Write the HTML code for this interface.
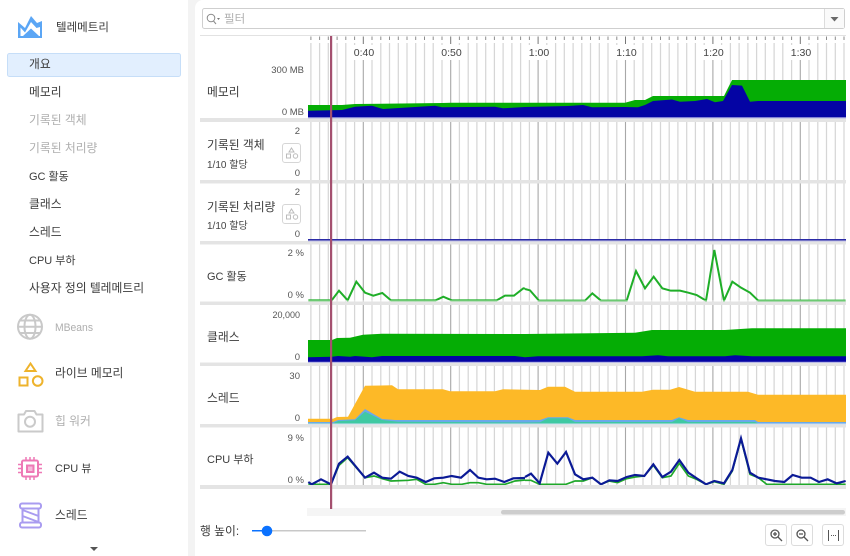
<!DOCTYPE html>
<html><head><meta charset="utf-8">
<style>
html,body{margin:0;padding:0;width:850px;height:556px;overflow:hidden;background:#f3f3f3}
svg{display:block}
text{font-family:"Liberation Sans","Noto Sans CJK KR",sans-serif;font-size:11.8px;fill:#3a3a3a}
.m{font-size:11px}
.d{fill:#aeaeae}
.a{font-size:9.5px;fill:#555;text-anchor:end}
.s{font-size:10px;fill:#444}
.t{font-size:10.5px;fill:#444;text-anchor:middle}
</style></head>
<body>
<svg width="850" height="556" viewBox="0 0 850 556" xmlns="http://www.w3.org/2000/svg">

<!-- panels -->
<rect x="-10" y="-10" width="198" height="576" rx="9" fill="#fff"/>
<rect x="195" y="0" width="665" height="566" rx="8" fill="#fff"/>

<!-- sidebar -->
<polygon points="18,22 25,28 31,16 37,23 42,21 42,38 18,38" fill="#5ba6f5"/>
<polygon points="20.5,27.5 25,32.5 31,22 36.5,28 40,27 40,36 20.5,36" fill="#fff"/>
<polygon points="23,36 31,28.5 39,36" fill="#5ba6f5"/>
<text x="56" y="31" style="font-size:11.5px">텔레메트리</text>
<rect x="7.5" y="53.5" width="173" height="23" rx="2" fill="#e2effe" stroke="#c6def8"/>
<text x="29" y="68">개요</text>
<text x="29" y="96">메모리</text>
<text x="29" y="124" class="d">기록된 객체</text>
<text x="29" y="152" class="d">기록된 처리량</text>
<text x="29" y="180" class="m">GC 활동</text>
<text x="29" y="208">클래스</text>
<text x="29" y="236">스레드</text>
<text x="29" y="264" class="m">CPU 부하</text>
<text x="29" y="292">사용자 정의 텔레메트리</text>

<g fill="none" stroke="#c9c9c9" stroke-width="2">
<circle cx="30" cy="326.7" r="12"/>
<ellipse cx="30" cy="326.7" rx="5.5" ry="12"/>
<path d="M18 326.7H42M20 320.5H40M20 333H40"/>
</g>
<text x="55" y="331" class="d m" textLength="38" lengthAdjust="spacingAndGlyphs">MBeans</text>

<g fill="none" stroke="#eeb32c" stroke-width="2">
<path d="M30.5 363.5L35.5 371H25.5Z"/>
<rect x="19.5" y="377.5" width="8" height="8"/>
<circle cx="37.7" cy="381" r="4.8"/>
</g>
<text x="55" y="377">라이브 메모리</text>

<g fill="none" stroke="#cacaca" stroke-width="2">
<path d="M18.500 414.500H24L26 411H34.500L36.500 414.500H42.500V431.500H18.500Z" stroke-linejoin="round"/>
<circle cx="30" cy="421.7" r="5"/>
</g>
<text x="55" y="425" class="d">힙 워커</text>

<g fill="none" stroke="#ee79b6" stroke-width="2">
<rect x="22" y="460.5" width="16" height="16" rx="1.5"/>
<rect x="27" y="465.5" width="6.5" height="6.5" fill="#f7bcdb"/>
<path d="M26 457V460M30 457V460M34 457V460M26 477V480M30 477V480M34 477V480M18 464.500H21.500M18 468.500H21.500M18 472.500H21.500M38.500 464.500H42M38.500 468.500H42M38.500 472.500H42" stroke-width="1.5"/>
</g>
<text x="55" y="472" class="m">CPU 뷰</text>

<g fill="none" stroke="#a99cf0" stroke-width="2">
<rect x="20" y="503.5" width="21" height="5" rx="2"/>
<rect x="20" y="522.5" width="21" height="5" rx="2"/>
<path d="M22.500 508.500V522.500M38.500 508.500V522.500M22.500 510L38.500 516M22.500 516L38.500 522"/>
</g>
<text x="55" y="519">스레드</text>
<polygon points="90,547 98,547 94,551" fill="#555"/>

<!-- filter -->
<rect x="202.5" y="8.5" width="642" height="20" rx="2" fill="#fff" stroke="#cfcfcf"/>
<rect x="825" y="9" width="19" height="19" fill="#fafafa"/>
<path d="M824.500 9V28" stroke="#dcdcdc"/>
<polygon points="830.5,17 838.5,17 834.5,21.5" fill="#6a6a6a"/>
<circle cx="211" cy="18" r="3.8" fill="none" stroke="#8a8a8a" stroke-width="1"/>
<path d="M213.500 21L216 24" stroke="#8a8a8a"/>
<polygon points="217,18 220,18 218.5,20" fill="#777"/>
<text x="224" y="22.500" style="font-size:11.5px;fill:#b0b0b0">필터</text>
<rect x="200" y="35" width="646" height="1" fill="#e2e2e2"/>

<!-- grid -->
<g fill="none">
<path stroke="#d6d6d6" stroke-width="1.25" d="M310.900 43V486M319.600 43V486M328.300 43V486M337.100 43V486M345.800 43V486M354.600 43V486M372 43V486M380.800 43V486M389.500 43V486M398.300 43V486M407 43V486M415.700 43V486M424.500 43V486M433.200 43V486M442 43V486M459.400 43V486M468.200 43V486M476.900 43V486M485.700 43V486M494.400 43V486M503.100 43V486M511.900 43V486M520.600 43V486M529.400 43V486M546.800 43V486M555.600 43V486M564.300 43V486M573.100 43V486M581.800 43V486M590.500 43V486M599.300 43V486M608 43V486M616.800 43V486M634.200 43V486M643 43V486M651.700 43V486M660.500 43V486M669.200 43V486M677.900 43V486M686.700 43V486M695.400 43V486M704.200 43V486M721.600 43V486M730.400 43V486M739.100 43V486M747.900 43V486M756.600 43V486M765.300 43V486M774.100 43V486M782.800 43V486M791.600 43V486M809 43V486M817.800 43V486M826.500 43V486M835.300 43V486M844 43V486"/>
<path stroke="#a8a8a8" stroke-width="1.1" d="M363.300 60V486M450.700 60V486M538.100 60V486M625.500 60V486M712.900 60V486M800.300 60V486"/>
<path stroke="#8c8c8c" stroke-width="1" d="M310.900 36.500V40M319.600 36.500V40M328.300 36.500V40M337.100 36.500V40M345.800 36.500V40M354.600 36.500V40M372 36.500V40M380.800 36.500V40M389.500 36.500V40M398.300 36.500V40M407 36.500V40M415.700 36.500V40M424.500 36.500V40M433.200 36.500V40M442 36.500V40M459.400 36.500V40M468.200 36.500V40M476.900 36.500V40M485.700 36.500V40M494.400 36.500V40M503.100 36.500V40M511.900 36.500V40M520.600 36.500V40M529.400 36.500V40M546.800 36.500V40M555.600 36.500V40M564.300 36.500V40M573.100 36.500V40M581.800 36.500V40M590.500 36.500V40M599.300 36.500V40M608 36.500V40M616.800 36.500V40M634.200 36.500V40M643 36.500V40M651.700 36.500V40M660.500 36.500V40M669.200 36.500V40M677.900 36.500V40M686.700 36.500V40M695.400 36.500V40M704.200 36.500V40M721.600 36.500V40M730.400 36.500V40M739.100 36.500V40M747.900 36.500V40M756.600 36.500V40M765.300 36.500V40M774.100 36.500V40M782.800 36.500V40M791.600 36.500V40M809 36.500V40M817.800 36.500V40M826.500 36.500V40M835.300 36.500V40M844 36.500V40"/>
<path stroke="#777" stroke-width="1" d="M363.300 36.500V44M450.700 36.500V44M538.100 36.500V44M625.500 36.500V44M712.900 36.500V44M800.300 36.500V44"/>
</g>
<g fill="#fff">
<rect x="352" y="45" width="24" height="15"/><rect x="439" y="45" width="24" height="15"/>
<rect x="527" y="45" width="24" height="15"/><rect x="614" y="45" width="24" height="15"/>
<rect x="701" y="45" width="24" height="15"/><rect x="789" y="45" width="24" height="15"/>
</g>
<text x="364" y="56" class="t">0:40</text>
<text x="451.5" y="56" class="t">0:50</text>
<text x="539" y="56" class="t">1:00</text>
<text x="626.5" y="56" class="t">1:10</text>
<text x="713.5" y="56" class="t">1:20</text>
<text x="801" y="56" class="t">1:30</text>

<!-- memory -->
<polygon fill="#05ad05" points="308,105 342,105 355,104 442,103 451,102.7 625,102.7 635,100 645,100 653,96 724,96 732,80 846,80 846,118 308,118"/>
<polygon fill="#0404a4" points="308,110.7 342,110 355,106.7 372,105.7 383,109 435,105.7 442,107.3 495,106.7 503,108.3 525,107 568,106 583,105 592,107.3 625,107 638,107.3 645,105 653,101 672,99.5 680,101.7 695,101 707,99 715,102.3 723,101 732,85 742,85.6 750,101.7 758,101 846,101 846,118 308,118"/>

<!-- throughput baseline -->
<rect x="308" y="239" width="538" height="1.5" fill="#2b2ba6"/>

<!-- GC -->
<g fill="none" stroke="#1fae28" stroke-width="6" stroke-linejoin="miter">
<polyline transform="translate(195 120) scale(.33333)" points="340,541 410,541 432,512 458,541 484,485 510,518 535,527 562,519 588,541 722,541 745,530 770,541 905,541 930,527 957,527 985,505 990,506"/>
<polyline transform="translate(525 240) scale(.33333)" points="0,147 15,151 42,182 180,182 202,160 228,182 305,182 333,93 360,145 386,110 412,145 437,152 465,152 490,158 515,165 543,182 568,30 597,182 622,125 648,143 675,158 700,182 962,182"/>
</g>

<!-- classes -->
<polygon fill="#05ad05" points="308,340 332,340 337,338 350,337.7 363,334.7 382,333.7 525,334 635,332.7 652,330 725,330 752,328.3 846,328.3 846,362 308,362"/>
<polygon fill="#0404a4" points="308,357.3 332,356.7 338,356 350,356.7 355,356 372,357.3 382,356 515,356 525,357.3 538,356.3 642,356.3 658,355.3 668,356.3 725,356.3 735,355.3 752,356.3 846,356.3 846,362 308,362"/>

<!-- threads -->
<polygon fill="#fdb927" points="308,418.7 333,418.7 337,417 348,416.7 365,385.7 392,385.3 398,389.3 443,389.3 450,391.3 495,391.3 503,389.3 540,390 548,386.7 565,386.7 575,391.7 642,391.7 653,389.7 670,389.7 679,387 695,391.7 748,391.7 758,394.7 846,394.7 846,423 308,423"/>
<polygon fill="#6aa9e9" points="308,422 333,422 338,420 355,419.3 365,409 382,419 395,420 540,420 548,417.3 568,417.3 575,420 672,420 679,417.3 688,420 755,420 758,422 846,422 846,424 308,424"/>
<polygon fill="#3fc9a2" points="308,423.3 333,423.3 338,421 355,420.3 365,411.7 382,420 398,421.7 525,422.5 540,422.3 548,418.3 568,418.3 575,422 672,422 679,418.3 688,422 755,422 758,423.5 308,424"/>

<!-- CPU -->
<g fill="none" stroke="#1fa82a" stroke-width="5">
<polyline transform="translate(195 426) scale(.33333)" points="340,175 408,175 432,118 458,95 510,155 537,150 562,158 588,165 640,163 665,160 692,175 718,175 745,170 770,175 800,175 825,170 850,170 875,175 930,175 960,165 990,162"/>
<polyline transform="translate(525 426) scale(.33333)" points="0,163 18,163 44,175 123,175 150,165 175,165 202,155 228,175 253,165 278,170 305,158 330,153 358,150 385,118 412,155 438,150 463,112 490,150 515,160 543,175 568,167 597,175 622,135 648,40 675,145 700,155 725,175 962,175"/>
</g>
<g fill="none" stroke="#0b1a96" stroke-width="6.5">
<polyline transform="translate(195 426) scale(.33333)" points="340,168 350,175 378,160 408,175 432,113 458,92 510,155 537,140 562,155 588,158 614,137 640,150 665,155 692,168 718,157 745,155 770,150 798,155 825,132 850,155 875,160 900,158 928,168 955,157 990,156"/>
<polyline transform="translate(525 426) scale(.33333)" points="0,153 18,143 44,172 70,80 97,113 123,78 150,145 175,160 202,155 228,175 253,163 278,165 305,153 330,147 358,150 385,115 412,153 438,137 463,102 490,140 515,157 543,175 568,165 597,172 622,132 648,37 675,140 700,155 725,160 750,165 778,168 803,147 830,155 857,155 882,168 908,160 935,172 962,165"/>
</g>

<!-- separators -->
<g fill="#e4e4e4">
<rect x="200" y="118" width="646" height="4"/>
<rect x="200" y="180" width="646" height="3.5"/>
<rect x="200" y="241" width="646" height="3.5"/>
<rect x="200" y="301.5" width="646" height="3.5"/>
<rect x="200" y="362.5" width="646" height="3.5"/>
<rect x="200" y="424" width="646" height="3.5"/>
<rect x="200" y="485" width="646" height="4"/>
</g>
<rect x="308" y="117.3" width="538" height="1.2" fill="#b9b9e6"/>
<rect x="308" y="240.5" width="538" height="1" fill="#c0c0e6"/>
<rect x="308" y="361.8" width="538" height="1.2" fill="#b9b9e6"/>
<rect x="308" y="423.5" width="538" height="1" fill="#cfe0f4"/>
<rect x="308" y="300" width="538" height="1.5" fill="#fff" opacity=".35"/>

<!-- labels -->
<text x="207" y="96">메모리</text>
<text x="304" y="73" class="a">300 MB</text>
<text x="304" y="115" class="a">0 MB</text>

<text x="207" y="149">기록된 객체</text>
<text x="207" y="168" class="s">1/10 할당</text>
<text x="300" y="134" class="a">2</text>
<text x="300" y="176" class="a">0</text>
<rect x="282.5" y="143.5" width="18" height="19" rx="2.5" fill="#fff" stroke="#d6d6d6"/>
<g fill="none" stroke="#bcbcbc"><path d="M291.500 148L294 152H289Z"/><rect x="286.5" y="154" width="4" height="4"/><circle cx="295.5" cy="156" r="2.2"/></g>

<text x="207" y="211">기록된 처리량</text>
<text x="207" y="229" class="s">1/10 할당</text>
<text x="300" y="195" class="a">2</text>
<text x="300" y="237" class="a">0</text>
<rect x="282.5" y="204.5" width="18" height="19" rx="2.5" fill="#fff" stroke="#d6d6d6"/>
<g fill="none" stroke="#bcbcbc"><path d="M291.500 209L294 213H289Z"/><rect x="286.5" y="215" width="4" height="4"/><circle cx="295.5" cy="217" r="2.2"/></g>

<text x="207" y="280" class="m">GC 활동</text>
<text x="304" y="256" class="a">2 %</text>
<text x="304" y="298" class="a">0 %</text>

<text x="207" y="341">클래스</text>
<text x="300" y="318" class="a" style="font-size:9px">20,000</text>
<text x="300" y="360" class="a">0</text>

<text x="207" y="402">스레드</text>
<text x="300" y="379" class="a">30</text>
<text x="300" y="421" class="a">0</text>

<text x="207" y="463" class="m">CPU 부하</text>
<text x="304" y="441" class="a">9 %</text>
<text x="304" y="483" class="a">0 %</text>

<!-- scrollbar -->
<rect x="307" y="508" width="539" height="8" fill="#f5f5f5"/>
<rect x="501" y="510" width="344" height="4.5" rx="2.2" fill="#cdcdcd"/>

<!-- cursor -->
<rect x="330" y="36" width="2.2" height="473" fill="#a4506f"/>

<!-- bottom -->
<text x="200" y="535">행 높이:</text>
<rect x="252" y="530" width="114" height="1.5" fill="#c8c8c8"/>
<rect x="252" y="530" width="15" height="1.5" fill="#0b72ff"/>
<circle cx="267" cy="531" r="5.3" fill="#0b72ff"/>

<g fill="#fff" stroke="#dcdcdc">
<rect x="765.5" y="524.5" width="21" height="21" rx="2.5"/>
<rect x="791.5" y="524.5" width="21" height="21" rx="2.5"/>
<rect x="822.5" y="524.5" width="21" height="21" rx="2.5"/>
</g>
<g fill="none" stroke="#555" stroke-width="1.3">
<circle cx="775" cy="534" r="4"/><path d="M778 537L782 541M773 534H777M775 532V536"/>
<circle cx="801" cy="534" r="4"/><path d="M804 537L808 541M799 534H803"/>
<path d="M828.500 530V541M838.500 530V541" stroke-width="1"/>
<path d="M831 535.500H836.500" stroke-width="1" stroke-dasharray="1 1"/>
</g>
</svg>
</body></html>
